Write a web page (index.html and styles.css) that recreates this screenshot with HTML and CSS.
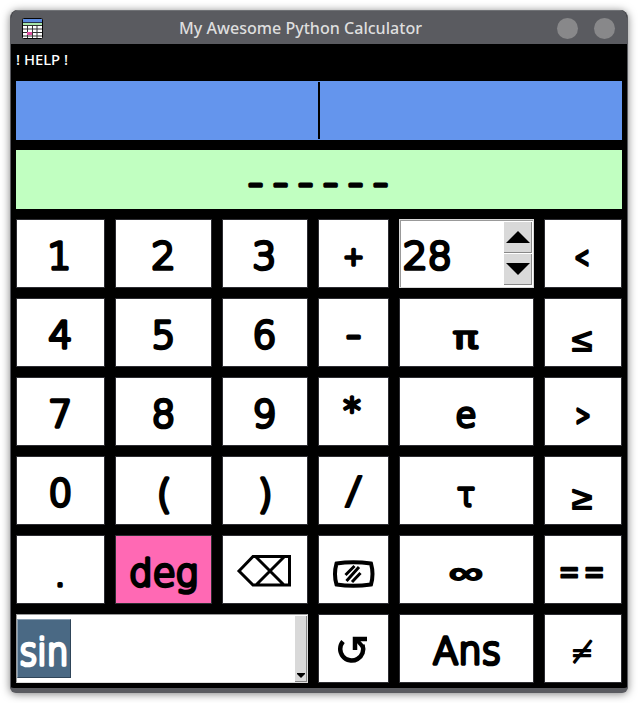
FILE: index.html
```html
<!DOCTYPE html>
<html lang="en">
<head>
<meta charset="utf-8">
<title>My Awesome Python Calculator</title>
<link rel="stylesheet" href="styles.css">
</head>
<body>
<main class="window">
  <header class="titlebar">
    <svg class="app-icon" width="22" height="22" viewBox="0 0 22 22">
      <rect x=".5" y=".5" width="20" height="20" rx="1" fill="#fff" stroke="#050505"/>
      <path d="M1 1h19v3H1z" fill="#5b8ae0"/><path d="M1 4h19v1H1z" fill="#24324a"/>
      <path d="M1 5h19v2H1z" fill="#a8e6a8"/>
      <path d="M1 7.5h19M1 11h19M1 14.5h19M1 18h19M5.5 7v13M10.500 7v13M15 7v13" stroke="#333" fill="none"/>
      <path d="M5 14h5v3H5z" fill="#e24fa0"/>
    </svg>
    <svg class="title" width="250" height="34"><text x="0" y="22.500" textLength="243" lengthAdjust="spacingAndGlyphs">My Awesome Python Calculator</text></svg>
    <span class="dots"><i></i><i></i></span>
  </header>
  <section class="content">
    <svg class="help" width="60" height="37"><text x="0" y="21" textLength="52" lengthAdjust="spacingAndGlyphs">! HELP !</text></svg>
    <div class="entry"><span class="caret"></span></div>
    <div class="result"><svg class="face"><text x="232" y="47" font-size="42" class="dashes">------</text></svg></div>
    <div class="keys">
      <button class="key"><svg class="face mid"><text x="43.5" y="49.500" font-size="37.500">1</text></svg></button>
      <button class="key"><svg class="face mid"><text x="48.500" y="49.500" font-size="37.500">2</text></svg></button>
      <button class="key"><svg class="face mid"><text x="42.500" y="49.500" font-size="37.500">3</text></svg></button>
      <button class="key"><svg class="face mid"><text x="35.500" y="46" font-size="24">+</text></svg></button>
      <div class="spin"><svg class="face"><text x="3" y="50" font-size="37.500" textLength="49" lengthAdjust="spacingAndGlyphs">28</text></svg>
        <div class="steps"><span><svg width="24" height="12"><path d="M12 0l12 12H0z"/></svg></span><span><svg width="24" height="12"><path d="M12 12L0 0h24z"/></svg></span></div>
      </div>
      <button class="key"><svg class="face"><text x="30.500" y="48" font-size="28" textLength="15" lengthAdjust="spacingAndGlyphs">&lt;</text></svg></button>

      <button class="key"><svg class="face mid"><text x="44.5" y="49.500" font-size="37.500">4</text></svg></button>
      <button class="key"><svg class="face mid"><text x="48.500" y="49.500" font-size="37.500">5</text></svg></button>
      <button class="key"><svg class="face mid"><text x="42.500" y="49.500" font-size="37.500">6</text></svg></button>
      <button class="key"><svg class="face mid"><text x="35.500" y="51" font-size="42">-</text></svg></button>
      <button class="key"><svg class="face"><text x="54.500" y="50" font-size="29" textLength="24" lengthAdjust="spacingAndGlyphs">π</text></svg></button>
      <button class="key"><svg class="face fine"><text x="28" y="52.500" font-size="32" textLength="20" lengthAdjust="spacingAndGlyphs">≤</text></svg></button>

      <button class="key"><svg class="face mid"><text x="44.5" y="49.500" font-size="37.500">7</text></svg></button>
      <button class="key"><svg class="face mid"><text x="48.500" y="49.500" font-size="37.500">8</text></svg></button>
      <button class="key"><svg class="face mid"><text x="42.500" y="49.500" font-size="37.500">9</text></svg></button>
      <button class="key"><svg class="face mid"><text x="34" y="45" font-size="34">*</text></svg></button>
      <button class="key"><svg class="face mid"><text x="67" y="49.500" font-size="34">e</text></svg></button>
      <button class="key"><svg class="face"><text x="31.500" y="47.500" font-size="28" textLength="15" lengthAdjust="spacingAndGlyphs">&gt;</text></svg></button>

      <button class="key"><svg class="face mid"><text x="44.5" y="49.500" font-size="37.500">0</text></svg></button>
      <button class="key"><svg class="face mid"><text x="49" y="52" font-size="39">(</text></svg></button>
      <button class="key"><svg class="face mid"><text x="43" y="52" font-size="39">)</text></svg></button>
      <button class="key"><svg class="face fine"><text x="27" y="47" font-size="37" textLength="17" lengthAdjust="spacingAndGlyphs">/</text></svg></button>
      <button class="key"><svg class="face"><text x="58" y="50" font-size="32" textLength="18" lengthAdjust="spacingAndGlyphs">τ</text></svg></button>
      <button class="key"><svg class="face fine"><text x="28" y="52.500" font-size="32" textLength="20" lengthAdjust="spacingAndGlyphs">≥</text></svg></button>

      <button class="key"><svg class="face mid"><text x="44" y="51" font-size="38" class="dot">.</text></svg></button>
      <button class="key pink"><svg class="face"><text x="14" y="50.500" font-size="37.500" textLength="69" lengthAdjust="spacingAndGlyphs">deg</text></svg></button>
      <button class="key"><svg class="face sharp"><path d="M17 36L31 21.500H67.500V50H31zM34 22L62 50M62 22L34 50" stroke-width="3"/></svg></button>
      <button class="key"><svg class="face sharp"><path d="M18.500 28.500Q35 26 53 28.500Q56 39 53 49.500Q35 52 18.500 49.500Q15.500 39 18.500 28.500z" stroke-width="4"/><path d="M27.500 40L36.500 31M28.500 46L41 32M34 47L42.500 38" stroke-width="3"/></svg></button>
      <button class="key"><svg class="face fine"><text x="50" y="48" font-size="30" textLength="34" lengthAdjust="spacingAndGlyphs">∞</text></svg></button>
      <button class="key"><svg class="face"><text transform="translate(14.500 52) scale(.58 1)" font-size="44" class="equals">==</text></svg></button>

      <div class="combo"><span class="selection"><svg class="face"><text x="1.500" y="45" font-size="37.500" textLength="49" lengthAdjust="spacingAndGlyphs">sin</text></svg></span>
        <span class="drop"><svg width="8" height="5"><path d="M0 0h8v1L4 5 0 1z"/></svg></span></div>
      <button class="key"><svg class="face sharp"><path d="M25 27.500A11.500 11.500 0 1 0 44.500 31" stroke-width="4.500"/><path d="M37 36V25H49" stroke-width="4.500"/><path d="M38 25L45 33" stroke-width="4"/></svg></button>
      <button class="key"><svg class="face"><text x="34" y="50" font-size="38" textLength="68" lengthAdjust="spacingAndGlyphs">Ans</text></svg></button>
      <button class="key"><svg class="face fine"><text x="27" y="48" font-size="29" textLength="22" lengthAdjust="spacingAndGlyphs">≠</text></svg></button>
    </div>
  </section>
</main>
</body>
</html>
```
FILE: styles.css
```css
* { box-sizing: border-box; }
body { margin: 0; background: #fff; width: 638px; height: 703px; overflow: hidden; padding: 10px; }
.window { width: 618px; height: 683px; border: 1px solid #5a5b60; border-top: 0; border-bottom: 5px solid #5a5b60; border-radius: 8px 8px 6px 6px; background: #000; box-shadow: 0 1px 9px rgba(0,0,0,.5); overflow: hidden; }
.titlebar { height: 34px; background: #5a5b60; border-top: 1px solid #707276; display: flex; align-items: center; padding: 0 12px 0 11px; }
.app-icon { flex: none; margin-top: 3px; }
.title { margin-left: 135px; flex: none; overflow: visible; }
.title text { font: 500 16px "Noto Sans", sans-serif; fill: #dedede; }
.dots { display: flex; gap: 16px; margin-left: auto; margin-top: 1px; }
.dots i { width: 21px; height: 21px; border-radius: 50%; background: #88888a; }
.content { padding: 0 5px; display: flex; flex-direction: column; }
.help { display: block; }
.help text { font: 500 14px "Noto Sans", sans-serif; fill: #fff; }
.entry { height: 59px; background: #6495ed; display: flex; justify-content: center; align-items: center; }
.caret { width: 2px; height: 57px; background: #000; }
.result { height: 59px; background: #c1ffc1; margin: 10px 0; }
.keys { display: grid; grid-template-columns: 89px 97px 86px 71px 135px 78px; grid-auto-rows: 69px; gap: 10px; }
.key { border: 0; padding: 0; margin: 0; background: #fff; outline: 1px solid #2d2d32; outline-offset: -1px; display: block; }
.key.pink { background: #ff69b4; }
.face { display: block; width: 100%; height: 100%; font-family: "DejaVu Sans", sans-serif; font-weight: 200; }
.face text { fill: #000; stroke: #000; stroke-width: 3.500px; stroke-linejoin: round; }
.fine text { stroke-width: 2px; }
.face .dot { stroke-width: 3.500px; }
.mid text { text-anchor: middle; }
.dashes { letter-spacing: 9.850px; }
.face .equals { letter-spacing: 6.200px; stroke-width: 3px; }
.sharp { fill: none; stroke: #000; }
.spin { background: #fff; border: 1px solid #d9d9d9; box-shadow: inset 1px 1px #999; display: flex; padding: 2px 1px 2px 0; }
.spin > .face { flex: 1; min-width: 0; margin-top: -3px; overflow: visible; }
.steps { width: 28px; display: flex; flex-direction: column; gap: 1px; }
.steps span { flex: 1; background: #d9d9d9; border-right: 1px solid #888; border-bottom: 1px solid #888; display: flex; align-items: center; justify-content: center; }
.combo { grid-column: span 3; background: #fff; border: 1px solid #ddd; border-top-color: #999; border-left-color: #999; display: flex; justify-content: space-between; padding: 1px 0 0; }
.selection { width: 54px; height: 59px; margin-top: 3px; background: #4a6984; border: 1px solid #2f4559; border-top-color: #8aa0b3; border-left-color: #8aa0b3; }
.selection .face { overflow: visible; }
.selection .face text { fill: #fff; stroke: #fff; }
.drop { width: 12px; background: #d9d9d9; border-right: 1px solid #888; border-bottom: 1px solid #888; display: flex; align-items: flex-end; justify-content: center; padding-bottom: 3px; }
```
